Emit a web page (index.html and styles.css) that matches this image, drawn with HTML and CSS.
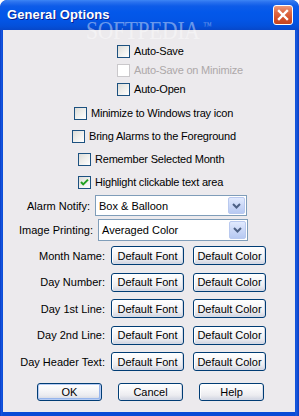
FILE: index.html
```html
<!DOCTYPE html>
<html>
<head>
<meta charset="utf-8">
<title>General Options</title>
<link rel="stylesheet" href="styles.css">
</head>
<body>
<div class="window">
  <div class="titlebar">
    <span class="title">General Options</span>
    <span class="close"><svg width="12" height="12" viewBox="0 0 12 12"><path d="M2 2 L10 10 M10 2 L2 10" stroke="#fff" stroke-width="2.4" stroke-linecap="square"/></svg></span>
  </div>
  <div class="client">
    <div class="group group-auto">
      <label class="check"><span class="box"></span>Auto-Save</label>
      <label class="check disabled"><span class="box"></span>Auto-Save on Minimize</label>
      <label class="check"><span class="box"></span>Auto-Open</label>
    </div>
    <div class="group group-opts">
      <label class="check ind-71"><span class="box"></span>Minimize to Windows tray icon</label>
      <label class="check ind-69"><span class="box"></span>Bring Alarms to the Foreground</label>
      <label class="check ind-75"><span class="box"></span>Remember Selected Month</label>
      <label class="check ind-75"><span class="box checked"><svg width="9" height="9" viewBox="0 0 9 9"><path d="M1 4 L3.2 6.4 L8 1.6" fill="none" stroke="#21A121" stroke-width="2"/></svg></span>Highlight clickable text area</label>
    </div>
    <div class="combos">
      <div class="combo-row">
        <span class="lbl lbl-87">Alarm Notify:</span>
        <div class="combo combo-a"><span class="value">Box &amp; Balloon</span><span class="drop"><svg width="9" height="6" viewBox="0 0 9 6"><path d="M1 1 L4.5 4.5 L8 1" fill="none" stroke="#4D6185" stroke-width="2"/></svg></span></div>
      </div>
      <div class="combo-row">
        <span class="lbl lbl-90">Image Printing:</span>
        <div class="combo combo-b"><span class="value">Averaged Color</span><span class="drop"><svg width="9" height="6" viewBox="0 0 9 6"><path d="M1 1 L4.5 4.5 L8 1" fill="none" stroke="#4D6185" stroke-width="2"/></svg></span></div>
      </div>
    </div>
    <div class="fonts">
      <div class="font-row"><span class="lbl">Month Name:</span><span class="btn">Default Font</span><span class="btn">Default Color</span></div>
      <div class="font-row"><span class="lbl">Day Number:</span><span class="btn">Default Font</span><span class="btn">Default Color</span></div>
      <div class="font-row"><span class="lbl">Day 1st Line:</span><span class="btn">Default Font</span><span class="btn">Default Color</span></div>
      <div class="font-row"><span class="lbl">Day 2nd Line:</span><span class="btn">Default Font</span><span class="btn">Default Color</span></div>
      <div class="font-row"><span class="lbl">Day Header Text:</span><span class="btn">Default Font</span><span class="btn">Default Color</span></div>
    </div>
    <div class="actions">
      <span class="btn btn-action default">OK</span>
      <span class="btn btn-action">Cancel</span>
      <span class="btn btn-action">Help</span>
    </div>
  </div>
  <div class="watermark">SOFTPEDIA<span class="tm">™</span></div>
</div>
</body>
</html>
```

FILE: styles.css
```css
* { box-sizing: border-box; }
html, body { margin: 0; padding: 0; }
body {
  width: 299px;
  height: 416px;
  overflow: hidden;
  background: #ffffff;
  font-family: "Liberation Sans", Arial, sans-serif;
  font-size: 11px;
  color: #000;
}
.window {
  position: relative;
  width: 299px;
  height: 416px;
  display: flex;
  flex-direction: column;
  background: linear-gradient(90deg, #0831B8 0px, #1657E0 1px, #0A4BD6 3px, #0A4BD6 295px, #1A5BE0 296px, #0A3FC4 299px);
  border-radius: 7px 7px 0 0;
  overflow: hidden;
  padding: 0 4px 4px 3px;
}
.titlebar {
  height: 30px;
  margin: 0 -4px 0 -3px;
  display: flex;
  align-items: flex-start;
  justify-content: space-between;
  padding: 8px 6px 0 7px;
  background: linear-gradient(180deg, #3D86F5 0px, #2B72EE 2px, #0E5CE8 6px, #0358EA 12px, #0355E6 20px, #0450DA 26px, #0747C9 30px);
  border-radius: 7px 7px 0 0;
}
.title {
  color: #fff;
  font-weight: bold;
  font-size: 13px;
  line-height: 14px;
  text-shadow: 1px 1px 0 #0A1E8C;
  letter-spacing: 0.1px;
}
.close {
  width: 20px;
  height: 20px;
  margin-top: -3px;
  border: 1px solid #ffffff;
  border-radius: 3px;
  display: flex;
  align-items: center;
  justify-content: center;
  background: linear-gradient(180deg, #EC9A7C 0%, #DE6A45 35%, #D3502A 70%, #C44420 100%);
}
.client {
  flex: 1;
  background: #ECEAED;
  display: flex;
  flex-direction: column;
}
.group { display: flex; flex-direction: column; }
.group-auto { margin-top: 15px; padding-left: 114px; gap: 6px; }
.group-opts { margin-top: 11px; gap: 10px; }
.check {
  display: flex;
  align-items: center;
  height: 13px;
  line-height: 13px;
  letter-spacing: -0.2px;
  white-space: nowrap;
}
.box {
  width: 13px;
  height: 13px;
  flex: none;
  margin-right: 4px;
  border: 1px solid #1C5180;
  background: linear-gradient(135deg, #DCDCD7 0%, #EDEDEA 45%, #FFFFFF 100%);
  display: flex;
  align-items: center;
  justify-content: center;
}
.check.disabled { color: #ACA8A9; }
.check.disabled .box { border-color: #CAC8CB; background: #FFFFFF; }
.ind-71 { margin-left: 71px; }
.ind-69 { margin-left: 69px; }
.ind-75 { margin-left: 75px; }

.combos { margin-top: 6px; display: flex; flex-direction: column; gap: 3px; }
.combo-row { display: flex; align-items: center; }
.combo-row .lbl { text-align: right; margin-right: 5px; white-space: nowrap; }
.lbl-87 { width: 87px; }
.lbl-90 { width: 90px; }
.combo {
  position: relative;
  display: flex;
  align-items: center;
  justify-content: space-between;
  border: 1px solid #7F9DB9;
  background: #fff;
  padding: 1px 1px 1px 3px;
}
.combo-a { width: 152px; height: 21px; }
.combo-b { width: 150px; height: 22px; }
.value { font-size: 11px; }
.drop {
  width: 17px;
  height: 100%;
  border: 1px solid #B9C9EF;
  border-radius: 2px;
  background: linear-gradient(180deg, #E1EAFE 0%, #CBD8F7 50%, #B7C9F2 100%);
  display: flex;
  align-items: center;
  justify-content: center;
}

.fonts { margin-top: 5px; display: flex; flex-direction: column; gap: 7.5px; }
.font-row { display: flex; align-items: center; height: 19px; }
.font-row .lbl { width: 102px; margin-right: 6px; text-align: right; white-space: nowrap; }
.btn {
  width: 73px;
  height: 19px;
  display: flex;
  align-items: center;
  justify-content: center;
  border: 1px solid #003C74;
  border-radius: 3px;
  background: linear-gradient(180deg, #FFFFFF 0%, #F7F7F9 35%, #ECECF0 70%, #D9DCE6 90%, #C4C9D8 100%);
  box-shadow: inset 1px 0 0 #fff, inset -1px -1px 0 #D5DAE6;
  white-space: nowrap;
}
.font-row .btn + .btn { margin-left: 9px; }
.actions { margin-top: 12px; display: flex; padding-left: 34px; gap: 16px; }
.btn-action { width: 65px; height: 18px; }
.btn-action.default { box-shadow: inset 0 0 0 1px #B6CCF4, inset -1px -1px 0 1px #97B5EC; }

.watermark {
  position: absolute;
  left: 86px;
  top: 21px;
  font-family: "Liberation Serif", "Times New Roman", serif;
  font-size: 25px;
  line-height: 20px;
  height: 20px;
  letter-spacing: -0.3px;
  color: rgba(255, 255, 255, 0.42);
  transform: scaleX(0.86);
  transform-origin: left top;
  pointer-events: none;
}
.watermark .tm { font-size: 10px; vertical-align: top; line-height: 10px; margin-left: 4px; }
```
